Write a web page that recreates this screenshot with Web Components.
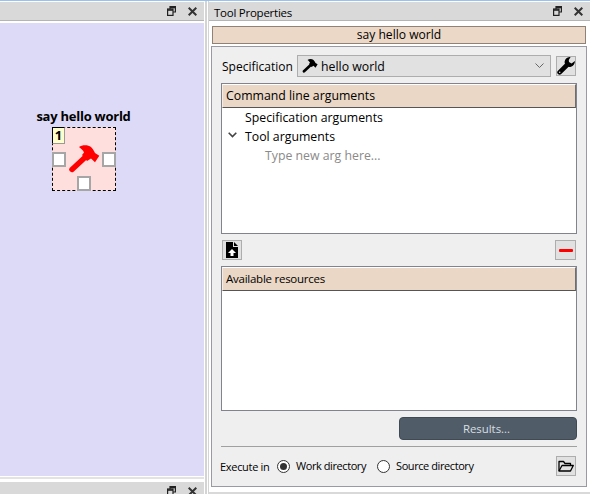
<!DOCTYPE html>
<html>
<head>
<meta charset="utf-8">
<title>Tool Properties</title>
<style>
  html, body { margin: 0; height: 100%; overflow: hidden; }
  body {
    width: 590px;
    height: 494px;
    background: #fff;
    font: 12.3px "Open Sans", "Liberation Sans", sans-serif;
    color: #000;
  }
</style>
</head>
<body>
<main-window>
  <dock-pane slot="left" style="height:475px">
    <design-canvas></design-canvas>
  </dock-pane>
  <dock-pane slot="left" style="margin-top:1px;border-top:2px solid #e3e3e3;padding-top:2px;height:14px"></dock-pane>
  <dock-pane slot="right" label="Tool Properties">
    <tool-properties></tool-properties>
  </dock-pane>
  <dock-pane slot="right" style="margin-top:4px;height:4px;overflow:hidden"></dock-pane>
</main-window>

<script>
(function() {
  // shared icon shapes, used in several shadow roots
  const icons = {
    hammer: `<svg viewBox="0 0 32 28" width="100%" height="100%" fill="currentColor">
      <path d="M4 24.500L18 11.500" stroke="currentColor" stroke-width="5.400" stroke-linecap="round"/>
      <path d="M11 2C14 -.3 20 -.5 23 2C25 4 26 6 27 8L31.300 10.700L27 17.300L23 13.500L19 16L14 10L16 7.500C15 5 13 3.500 11 2Z"/>
    </svg>`,
    wrench: `<svg viewBox="0 0 18 18" width="100%" height="100%" fill="#000">
      <path d="M2.600 15.400L9.500 8.500" stroke="#000" stroke-width="4.600" stroke-linecap="round"/>
      <path d="M13.600 0C10.200 -.2 7.800 2 7.600 4.800C7.500 6.400 8.300 7.900 9.300 8.800C10.600 10 12.400 10.300 14 9.800C16.300 9.100 17.900 6.900 18 3.900L14.500 6.500L12 5.100L11.800 3Z"/>
      <circle cx="2.700" cy="15.300" r=".8" fill="#ddd"/>
    </svg>`,
    upload: `<svg viewBox="0 0 12 16" width="100%" height="100%">
      <path d="M0 0H7V5H12V16H0Z" fill="#000"/><path d="M8 0L12 4H8Z" fill="#000"/>
      <path d="M6 7L10 11H7.500V14H4.500V11H2Z" fill="#fff"/>
    </svg>`,
    folder: `<svg viewBox="0 0 16 12" width="100%" height="100%" fill="none" stroke="#000" stroke-width="1.300" stroke-linejoin="round">
      <path d="M1 11V1.500H5.500L7 3.500H12.500V5.500"/><path d="M1 11L4 5.500H15.300L12.500 11Z"/>
    </svg>`
  };

  class MainWindow extends HTMLElement {
    constructor() {
      super();
      this.attachShadow({ mode: 'open' }).innerHTML = `
      <style>
        :host {
          display: grid;
          grid-template-columns: 204px 381px;
          column-gap: 5px;
          width: 590px;
          height: 494px;
          box-sizing: border-box;
          border-top: 1px solid #99c3ee;
          background: linear-gradient(90deg, #fff 205px, #d4d4d4 205px, #d4d4d4 207px, #fff 207px, #fff 208px, #d4d4d4 208px, #d4d4d4 209px, #fff 209px);
        }
        .col { display: flex; flex-direction: column; min-width: 0; height: 493px; overflow: hidden; }
        .right { background: #fff; }
      </style>
      <div class="col"><slot name="left"></slot></div>
      <div class="col right"><slot name="right"></slot></div>`;
    }
  }

  class DockPane extends HTMLElement {
    constructor() {
      super();
      this.attachShadow({ mode: 'open' }).innerHTML = `
      <style>
        :host { display: flex; flex-direction: column; flex: none; }
        .bar {
          flex: none;
          display: flex;
          align-items: center;
          height: 18px;
          margin-top: 1px;
          padding: 0 7px 0 5px;
          background: #d9d9d9;
          border-bottom: 1px solid #b4b4b4;
        }
        .title { flex: 1; padding-top: 2px; font-size: 11.500px; letter-spacing: -.25px; }
        svg { display: block; }
        svg + svg { margin-left: 12px; }
        .body { flex: 1; min-height: 0; display: flex; }
      </style>
      <div class="bar">
        <span class="title"></span>
        <svg width="9" height="10" viewBox="0 0 9 10" fill="none" stroke="#222" stroke-width="1.200">
          <path d="M3 3V.6H8.400V6H6"/><rect x=".6" y="3" width="5.400" height="6.400"/><path d="M3 1.500H8" stroke-width="1.600"/><path d="M1 4H6" stroke-width="1.600"/>
        </svg>
        <svg width="9" height="9" viewBox="0 0 9 9" stroke="#333" stroke-width="2"><path d="M.7 .7L8.300 8.300M8.300 .7L.7 8.300"/></svg>
      </div>
      <div class="body"><slot></slot></div>`;
      this.shadowRoot.querySelector('.title').textContent = this.getAttribute('label') || '';
    }
  }

  class DesignCanvas extends HTMLElement {
    constructor() {
      super();
      this.attachShadow({ mode: 'open' }).innerHTML = `
      <style>
        :host {
          display: block;
          position: relative;
          flex: 1;
          margin-top: 2px;
          background: #dddaf7;
        }
        .label {
          position: absolute;
          left: 0; top: 84px;
          width: 167px;
          text-align: center;
          font: bold 13px "Open Sans", "Liberation Sans", sans-serif;
          letter-spacing: -.25px;
          white-space: nowrap;
        }
        .node {
          position: absolute;
          left: 52px; top: 104px;
          width: 64px; height: 64px;
          box-sizing: border-box;
          border: 1px dashed #000;
          background: #ffdede;
        }
        .rank {
          position: absolute;
          left: -1px; top: -1px;
          width: 11px; height: 15px;
          border: 1px solid #999;
          border-top-color: #000;
          border-left-color: #000;
          background: #ffffcc;
          text-align: center;
          font: bold 13px/15px "Open Sans", "Liberation Sans", sans-serif;
        }
        .port {
          position: absolute;
          width: 10px; height: 11px;
          border: 2px solid #a6a6a6;
          background: #fff;
        }
        .hammer { position: absolute; left: 15px; top: 17px; width: 32px; height: 28px; color: #f00; }
      </style>
      <div class="label">say hello world</div>
      <div class="node">
        <div class="rank">1</div>
        <div class="hammer">${icons.hammer}</div>
        <div class="port" style="left:-1px;top:24px"></div>
        <div class="port" style="right:-1px;top:24px"></div>
        <div class="port" style="left:24px;bottom:-1px"></div>
      </div>`;
    }
  }

  class SectionHeader extends HTMLElement {
    constructor() {
      super();
      this.attachShadow({ mode: 'open' }).innerHTML = `
      <style>
        :host {
          display: flex;
          flex: none;
          align-items: center;
          box-sizing: border-box;
          height: 24px;
          padding: 0 0 1px 3px;
          background: #ead7c5;
          border-top: 1px solid #fff;
          border-left: 1px solid #f6eee6;
          border-right: 1px solid #6e6e6e;
          border-bottom: 1px solid #555;
        }
      </style>
      <slot></slot>`;
    }
  }

  class ListBox extends HTMLElement {
    constructor() {
      super();
      this.attachShadow({ mode: 'open' }).innerHTML = `
      <style>
        :host {
          display: flex;
          flex-direction: column;
          flex: none;
          box-sizing: border-box;
          margin: 0 0 0 9px;
          width: 356px;
          border: 1px solid #83838f;
          background: #fff;
        }
        .content { flex: 1; min-height: 0; }
      </style>
      <slot name="header"></slot>
      <div class="content"><slot></slot></div>`;
    }
  }

  class TreeRow extends HTMLElement {
    constructor() {
      super();
      const depth = Number(this.getAttribute('depth') || 0);
      const open = this.hasAttribute('open');
      this.attachShadow({ mode: 'open' }).innerHTML = `
      <style>
        :host {
          display: flex;
          align-items: center;
          box-sizing: border-box;
          height: 19px;
          padding: 0 0 0 ${23 + depth * 20}px;
          position: relative;
          white-space: nowrap;
        }
        :host([hint]) { color: #8a8a8a; }
        svg { position: absolute; left: 6px; top: 5px; }
      </style>
      ${open ? '<svg width="9" height="6" viewBox="0 0 9 6" fill="none" stroke="#444" stroke-width="1.600"><path d="M.7 .7L4.500 4.500L8.300 .7"/></svg>' : ''}
      <slot></slot>`;
    }
  }

  class IconButton extends HTMLElement {
    constructor() {
      super();
      this.attachShadow({ mode: 'open' }).innerHTML = `
      <style>
        :host {
          display: flex;
          flex: none;
          align-items: center;
          justify-content: center;
          box-sizing: border-box;
          width: 20px; height: 20px;
          border: 1px solid #adadad;
          background: #e1e1e1;
        }
      </style>
      <slot></slot>`;
    }
  }

  class RadioOption extends HTMLElement {
    constructor() {
      super();
      this.attachShadow({ mode: 'open' }).innerHTML = `
      <style>
        :host { display: inline-flex; align-items: center; gap: 6px; padding-bottom: 2px; font-size: 11px; letter-spacing: -.42px; }
        i {
          display: flex; align-items: center; justify-content: center;
          box-sizing: border-box; width: 13px; height: 13px; margin-top: 2px;
          border: 1px solid #333; border-radius: 50%; background: #fff;
        }
        :host([checked]) i::after { content: ""; width: 7px; height: 7px; border-radius: 50%; background: #333; }
      </style>
      <i></i><slot></slot>`;
    }
  }

  class ToolProperties extends HTMLElement {
    constructor() {
      super();
      this.attachShadow({ mode: 'open' }).innerHTML = `
      <style>
        :host {
          display: flex;
          flex-direction: column;
          flex: 1;
          padding: 5px 3px 0 2px;
        }
        .name {
          flex: none;
          box-sizing: border-box;
          height: 18px;
          margin: 0 1px;
          background: #ecd8c6;
          border: 1px solid #8f8378;
          text-align: center;
          font-size: 12.100px;
          line-height: 16px;
        }
        .frame {
          flex: none;
          box-sizing: border-box;
          height: 441px;
          margin-top: 2px;
          padding-top: 8px;
          background: #efefef;
          border: 1px solid #9a9aa2;
        }
        .spec { display: flex; align-items: center; height: 22px; padding-left: 10px; }
        .spec > span { width: 75px; flex: none; font-size: 12px; }
        .combo {
          display: flex; align-items: center; gap: 3px;
          box-sizing: border-box; width: 254px; height: 22px;
          padding: 0 6px 0 4px;
          border: 1px solid #adadad; background: #e1e1e1;
        }
        .combo .hi { width: 16px; height: 14px; color: #000; flex: none; }
        .combo .txt { flex: 1; }
        .spec icon-button { margin-left: 5px; }
        .wr { width: 18px; height: 18px; }
        .actions {
          display: flex;
          justify-content: space-between;
          box-sizing: border-box;
          width: 364px;
          padding: 6px 0 0 10px;
        }
        .up { width: 12px; height: 16px; }
        .minus { width: 14px; height: 3px; background: #f00; border-radius: 1px; }
        .avail { font-size: 11.500px; letter-spacing: -.25px; }
        .results {
          box-sizing: border-box;
          width: 178px; height: 23px;
          margin: 6px 0 0 187px;
          padding-right: 3px;
          background: #505d69;
          border: 1px solid #3f4a54;
          border-radius: 4px;
          color: #d9dee2;
          text-align: center;
          line-height: 21px;
          font-size: 11.400px;
        }
        hr { margin: 6px 0 0 9px; width: 356px; height: 1px; border: 0; background: #a0a0a0; }
        .exec { display: flex; align-items: center; height: 20px; margin-top: 9px; padding-left: 8px; font-size: 11px; letter-spacing: -.3px; }
        .exec .lbl { width: 57px; flex: none; }
        .exec radio-option + radio-option { margin-left: 11px; }
        .exec icon-button { margin-left: auto; margin-right: 10px; }
        .fo { width: 16px; height: 12px; }
      </style>
      <div class="name">say hello world</div>
      <div class="frame">
        <div class="spec">
          <span>Specification</span>
          <div class="combo">
            <div class="hi">${icons.hammer}</div>
            <span class="txt">hello world</span>
            <svg width="9" height="6" viewBox="0 0 9 6" fill="none" stroke="#666"><path d="M.5 .5L4.500 4.500L8.500 .5"/></svg>
          </div>
          <icon-button><div class="wr">${icons.wrench}</div></icon-button>
        </div>
        <list-box style="height:151px;margin-top:6px">
          <section-header slot="header">Command line arguments</section-header>
          <tree-row>Specification arguments</tree-row>
          <tree-row open>Tool arguments</tree-row>
          <tree-row depth="1" hint>Type new arg here...</tree-row>
        </list-box>
        <div class="actions">
          <icon-button><div class="up">${icons.upload}</div></icon-button>
          <icon-button style="width:21px"><div class="minus"></div></icon-button>
        </div>
        <list-box style="height:145px;margin-top:6px">
          <section-header slot="header"><span class="avail">Available resources</span></section-header>
        </list-box>
        <div class="results">Results...</div>
        <hr>
        <div class="exec">
          <span class="lbl">Execute in</span>
          <radio-option checked>Work directory</radio-option>
          <radio-option>Source directory</radio-option>
          <icon-button><div class="fo">${icons.folder}</div></icon-button>
        </div>
      </div>`;
    }
  }

  customElements.define('main-window', MainWindow);
  customElements.define('dock-pane', DockPane);
  customElements.define('design-canvas', DesignCanvas);
  customElements.define('section-header', SectionHeader);
  customElements.define('list-box', ListBox);
  customElements.define('tree-row', TreeRow);
  customElements.define('icon-button', IconButton);
  customElements.define('radio-option', RadioOption);
  customElements.define('tool-properties', ToolProperties);
})();
</script>
</body>
</html>
